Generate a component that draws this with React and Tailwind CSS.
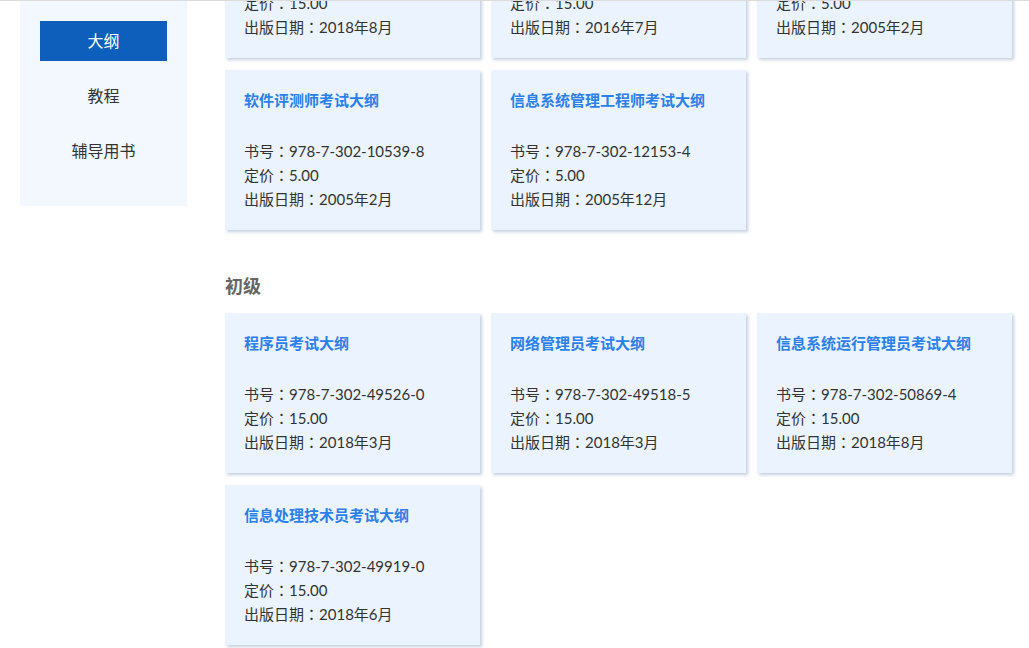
import React from 'react';

const menu = ['大纲', '教程', '辅导用书'];

const middle = [
  { title: '系统分析师考试大纲', isbn: '978-7-302-50870-0', price: '15.00', date: '2018年8月' },
  { title: '网络工程师考试大纲', isbn: '978-7-302-43681-2', price: '15.00', date: '2016年7月' },
  { title: '数据库系统工程师考试大纲', isbn: '978-7-302-10541-1', price: '5.00', date: '2005年2月' },
  { title: '软件评测师考试大纲', isbn: '978-7-302-10539-8', price: '5.00', date: '2005年2月' },
  { title: '信息系统管理工程师考试大纲', isbn: '978-7-302-12153-4', price: '5.00', date: '2005年12月' },
];

const junior = [
  { title: '程序员考试大纲', isbn: '978-7-302-49526-0', price: '15.00', date: '2018年3月' },
  { title: '网络管理员考试大纲', isbn: '978-7-302-49518-5', price: '15.00', date: '2018年3月' },
  { title: '信息系统运行管理员考试大纲', isbn: '978-7-302-50869-4', price: '15.00', date: '2018年8月' },
  { title: '信息处理技术员考试大纲', isbn: '978-7-302-49919-0', price: '15.00', date: '2018年6月' },
];

// centred full-width colon, as the reference's font draws it
const Colon = () => <span style={{ fontFamily: '"Noto Sans CJK TC", sans-serif' }}>：</span>;

const BookCard = ({ book }) => (
  <div className="h-[160px] bg-[#ebf3fe] pl-[19px] pr-3 pt-[18px] pb-[19px] shadow-[2px_2px_3px_rgba(150,170,200,0.55)]">
    <h3 className="truncate text-[15px] font-bold leading-[24px] text-[#2b7fe9]">{book.title}</h3>
    <div className="mt-[27px] text-[15px] leading-[24px] text-[#333333]">
      <p>书号<Colon />{book.isbn}</p>
      <p>定价<Colon />{book.price}</p>
      <p>出版日期<Colon />{book.date}</p>
    </div>
  </div>
);

const App = () => {
  return (
    <div
      className="flex h-[648px] w-full overflow-hidden border-t border-[#dcdcdc] bg-white"
      style={{ fontFamily: 'Lato, "Noto Sans CJK SC", sans-serif' }}
    >
      {/* Sidebar */}
      <aside className="ml-5 w-[167px] shrink-0 self-start bg-[#f2f8fe] px-5 pt-5 pb-[35px]">
        {menu.map((item, i) => (
          <div
            key={item}
            className={
              i === 0
                ? 'flex h-10 items-center justify-center bg-[#0e5fbb] text-[16px] text-white'
                : 'mt-[15px] flex h-10 items-center justify-center text-[16px] text-[#333333]'
            }
          >
            {item}
          </div>
        ))}
      </aside>

      {/* Book list */}
      <main className="ml-[38px] mt-[-103px]">
        <div className="grid grid-cols-[repeat(3,255px)] gap-x-[11px] gap-y-[12px]">
          {middle.map((book) => (
            <BookCard key={book.isbn} book={book} />
          ))}
        </div>

        <h2 className="mt-[42px] mb-[13px] text-[18px] font-bold leading-[28px] text-[#666666]">初级</h2>
        <div className="grid grid-cols-[repeat(3,255px)] gap-x-[11px] gap-y-[12px]">
          {junior.map((book) => (
            <BookCard key={book.isbn} book={book} />
          ))}
        </div>
      </main>
    </div>
  );
};

export default App;
